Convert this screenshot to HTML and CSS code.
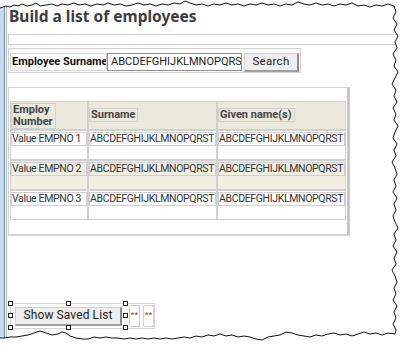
FILE: index.html
```html
<!DOCTYPE html>
<html>
<head>
<meta charset="utf-8">
<link rel="stylesheet" href="styles.css">
</head>
<body>
<div class="shot">
  <div class="winedge"></div>
  <div class="content">
    <h1 class="title">Build a list of employees</h1>
    <div class="bar"></div>
    <div class="search">
      <span class="lbl">Employee Surname</span>
      <span class="inp">ABCDEFGHIJKLMNOPQRS</span>
      <span class="btn">Search</span>
    </div>
    <div class="gridwrap">
      <div class="strip"></div>
      <table class="grid">
        <colgroup><col class="c1"><col class="c2"><col class="c3"></colgroup>
        <tr class="head">
          <th><span class="hbox">Employ<br>Number</span></th>
          <th><span class="hbox">Surname</span></th>
          <th><span class="hbox">Given name(s)</span></th>
        </tr>
        <tr class="r1">
          <td><span class="dbox">Value EMPNO 1</span></td>
          <td><span class="dbox">ABCDEFGHIJKLMNOPQRST</span></td>
          <td><span class="dbox">ABCDEFGHIJKLMNOPQRST</span></td>
        </tr>
        <tr class="r2 alt">
          <td><span class="dbox">Value EMPNO 2</span></td>
          <td><span class="dbox">ABCDEFGHIJKLMNOPQRST</span></td>
          <td><span class="dbox">ABCDEFGHIJKLMNOPQRST</span></td>
        </tr>
        <tr class="r3">
          <td><span class="dbox">Value EMPNO 3</span></td>
          <td><span class="dbox">ABCDEFGHIJKLMNOPQRST</span></td>
          <td><span class="dbox">ABCDEFGHIJKLMNOPQRST</span></td>
        </tr>
      </table>
    </div>
    <div class="bottom">
      <div class="sel">
        <span class="showbtn">Show Saved List</span>
        <i class="h h1"></i><i class="h h2"></i><i class="h h3"></i>
        <i class="h h4"></i><i class="h h5"></i>
        <i class="h h6"></i><i class="h h7"></i><i class="h h8"></i>
      </div>
      <span class="mini">**</span>
      <span class="mini">**</span>
    </div>
  </div>
  <svg class="torn" width="412" height="354" viewBox="0 0 412 354">
    <path class="mask" fill-rule="evenodd" d="M0 0H412V354H0Z M0 8 L6 6 L10 7 L14 5 L18 6 L22 4 L27 6 L32 5 L36 3 L40 6 L46 5 L52 4 L57 6 L62 4 L68 5 L74 3 L79 5 L85 4 L91 6 L97 4 L103 5 L108 3 L114 5 L120 4 L126 6 L132 5 L138 3 L144 5 L150 4 L156 6 L162 4 L168 5 L174 3 L180 4 L185 1 L190 3 L196 5 L202 4 L208 6 L214 4 L220 5 L226 3 L232 5 L238 4 L244 6 L250 4 L256 5 L262 3 L268 5 L274 4 L280 6 L286 4 L292 5 L298 2 L304 4 L310 5 L316 3 L322 5 L328 4 L334 6 L340 4 L346 5 L352 3 L358 6 L364 5 L370 7 L376 5 L382 6 L388 4 L394 6 L396 12 L393 18 L397 24 L394 30 L398 36 L395 42 L397 48 L393 54 L396 60 L394 66 L398 72 L395 78 L392 84 L396 90 L394 96 L397 102 L393 108 L396 114 L394 120 L398 126 L395 132 L393 138 L397 144 L394 150 L396 156 L392 162 L395 168 L397 174 L394 180 L396 186 L393 192 L397 198 L394 204 L396 210 L393 216 L395 222 L398 228 L394 234 L396 240 L393 246 L397 252 L394 258 L396 264 L392 270 L395 276 L397 282 L394 288 L396 294 L393 300 L397 306 L394 312 L396 318 L393 324 L396 330 L395 334 L388 333 L382 335 L376 333 L370 334 L364 332 L358 334 L352 336 L346 334 L340 335 L334 333 L328 334 L322 336 L316 335 L310 337 L304 336 L298 335 L292 333 L286 332 L280 335 L274 336 L268 337 L262 340 L256 339 L250 337 L244 336 L238 337 L232 335 L226 336 L220 334 L214 336 L208 335 L202 337 L196 336 L190 338 L184 337 L178 338 L172 339 L166 338 L160 339 L154 338 L148 339 L142 338 L136 339 L130 338 L124 339 L118 338 L112 338 L106 337 L100 338 L94 337 L88 339 L82 339 L76 338 L70 336 L66 333 L62 332 L58 334 L52 335 L46 333 L40 331 L34 333 L28 335 L22 336 L16 337 L10 337 L4 338 L0 338 Z"/>
    <path class="line" d="M0 8 L6 6 L10 7 L14 5 L18 6 L22 4 L27 6 L32 5 L36 3 L40 6 L46 5 L52 4 L57 6 L62 4 L68 5 L74 3 L79 5 L85 4 L91 6 L97 4 L103 5 L108 3 L114 5 L120 4 L126 6 L132 5 L138 3 L144 5 L150 4 L156 6 L162 4 L168 5 L174 3 L180 4 L185 1 L190 3 L196 5 L202 4 L208 6 L214 4 L220 5 L226 3 L232 5 L238 4 L244 6 L250 4 L256 5 L262 3 L268 5 L274 4 L280 6 L286 4 L292 5 L298 2 L304 4 L310 5 L316 3 L322 5 L328 4 L334 6 L340 4 L346 5 L352 3 L358 6 L364 5 L370 7 L376 5 L382 6 L388 4 L394 6 L396 12 L393 18 L397 24 L394 30 L398 36 L395 42 L397 48 L393 54 L396 60 L394 66 L398 72 L395 78 L392 84 L396 90 L394 96 L397 102 L393 108 L396 114 L394 120 L398 126 L395 132 L393 138 L397 144 L394 150 L396 156 L392 162 L395 168 L397 174 L394 180 L396 186 L393 192 L397 198 L394 204 L396 210 L393 216 L395 222 L398 228 L394 234 L396 240 L393 246 L397 252 L394 258 L396 264 L392 270 L395 276 L397 282 L394 288 L396 294 L393 300 L397 306 L394 312 L396 318 L393 324 L396 330 L395 334 L388 333 L382 335 L376 333 L370 334 L364 332 L358 334 L352 336 L346 334 L340 335 L334 333 L328 334 L322 336 L316 335 L310 337 L304 336 L298 335 L292 333 L286 332 L280 335 L274 336 L268 337 L262 340 L256 339 L250 337 L244 336 L238 337 L232 335 L226 336 L220 334 L214 336 L208 335 L202 337 L196 336 L190 338 L184 337 L178 338 L172 339 L166 338 L160 339 L154 338 L148 339 L142 338 L136 339 L130 338 L124 339 L118 338 L112 338 L106 337 L100 338 L94 337 L88 339 L82 339 L76 338 L70 336 L66 333 L62 332 L58 334 L52 335 L46 333 L40 331 L34 333 L28 335 L22 336 L16 337 L10 337 L4 338 L0 338"/>
  </svg>
</div>
</body>
</html>
```
FILE: styles.css
```css
html, body {
  margin: 0;
  padding: 0;
  background: #fff;
}
.shot {
  position: relative;
  width: 412px;
  height: 354px;
  overflow: hidden;
  display: flex;
  font-family: Roboto, "Liberation Sans", sans-serif;
  color: #222;
}
.winedge {
  flex: none;
  width: 4px;
  background: #c8daf2;
  border-right: 1px solid #6f8db3;
  box-shadow: 1px 0 0 #fff, 2px 0 0 #aabcd4;
  margin-right: 3px;
}
.content {
  flex: 1;
  padding-top: 6px;
  min-width: 0;
}
.title {
  margin: 0;
  font-family: "Noto Sans", sans-serif;
  font-size: 15.5px;
  line-height: 20px;
  font-weight: 700;
  color: #3d3d3d;
  padding-left: 1px;
}
.bar {
  margin-top: 8px;
  height: 9px;
  border: 1px solid #cfcfcf;
  border-right: none;
}
.search {
  margin-top: 3px;
  display: inline-flex;
  align-items: flex-start;
  border: 1px solid #d2d2d2;
  padding: 4px 1px 0 1px;
  height: 19px;
}
.lbl {
  box-sizing: border-box;
  width: 97px;
  height: 18px;
  border: 1px solid #d6d6d6;
  font-size: 11px;
  font-weight: 700;
  line-height: 16px;
  padding-left: 1px;
  white-space: nowrap;
  overflow: hidden;
  color: #111;
}
.inp {
  box-sizing: border-box;
  width: 135px;
  height: 18px;
  border: 1px solid #8e8e8e;
  font-size: 11px;
  line-height: 16px;
  padding-left: 3px;
  white-space: nowrap;
  overflow: hidden;
  color: #222;
}
.btn {
  box-sizing: border-box;
  margin-left: 2px;
  width: 55px;
  height: 19px;
  background: #efefef;
  border: 1px solid #d0d0d0;
  border-right: 2px solid #8c8c8c;
  border-bottom: 2px solid #a0a0a0;
  font-size: 11.5px;
  line-height: 15px;
  text-align: center;
  color: #222;
  letter-spacing: 0.3px;
}
.gridwrap {
  margin-top: 14px;
  width: 336px;
  border-left: 1px solid #d4d4d4;
  border-top: 1px solid #d4d4d4;
  border-right: 3px solid #c8c8c8;
  border-bottom: 2px solid #d4d4d4;
  padding: 0 1px 14px 1px;
}
.strip {
  height: 13px;
}
.grid {
  border-collapse: separate;
  border-spacing: 0;
  table-layout: fixed;
  width: 336px;
}
.c1 { width: 78px; }
.c2 { width: 129px; }
.c3 { width: 129px; }
.grid th, .grid td {
  border: 1px solid #d0d0d0;
  padding: 1px 0 0 0;
  vertical-align: top;
  text-align: left;
  overflow: hidden;
}
.head th {
  background: #ebe8dc;
  height: 26px;
}
.grid td {
  height: 27px;
}
.alt td {
  background: #f1efe3;
}
.hbox {
  display: inline-block;
  border: 1px solid #cfcfcf;
  font-size: 11px;
  font-weight: 700;
  line-height: 12px;
  padding: 0 2px 0 1px;
  color: #444;
}
.dbox {
  display: block;
  border: 1px solid #cfcfcf;
  font-size: 10.5px;
  letter-spacing: -0.35px;
  line-height: 12px;
  white-space: nowrap;
  overflow: hidden;
  color: #333;
}
.bottom {
  margin-top: 67px;
  margin-left: 2px;
  display: inline-flex;
  align-items: flex-start;
  border: 1px solid #d6d6d6;
  height: 24px;
}
.sel {
  position: relative;
  box-sizing: border-box;
  width: 115px;
  height: 24px;
  padding: 3px 0 0 4px;
}
.showbtn {
  display: block;
  box-sizing: border-box;
  width: 107px;
  height: 19px;
  background: #efefef;
  border: 1px solid #d0d0d0;
  border-right: 2px solid #8c8c8c;
  border-bottom: 2px solid #a0a0a0;
  font-size: 12px;
  line-height: 15px;
  text-align: center;
  color: #222;
  letter-spacing: 0.1px;
}
.h {
  position: absolute;
  width: 3px;
  height: 3px;
  border: 1px solid #222;
  background: #fff;
}
.h1 { left: -3px; top: -3px; }
.h2 { left: 55px; top: -3px; }
.h3 { left: 112px; top: -3px; }
.h4 { left: -3px; top: 9px; }
.h5 { left: 112px; top: 9px; }
.h6 { left: -3px; top: 21px; }
.h7 { left: 55px; top: 21px; }
.h8 { left: 112px; top: 21px; }
.mini {
  box-sizing: border-box;
  margin-left: 3px;
  margin-top: 1px;
  width: 11px;
  height: 22px;
  border: 1px solid #d0d0d0;
  font-size: 8px;
  line-height: 18px;
  text-align: center;
  color: #8a6c4a;
  font-weight: 700;
}
.torn {
  position: absolute;
  left: 0;
  top: 0;
}
.mask {
  fill: #fff;
}
.line {
  fill: none;
  stroke: #111;
  stroke-width: 1;
}
```
